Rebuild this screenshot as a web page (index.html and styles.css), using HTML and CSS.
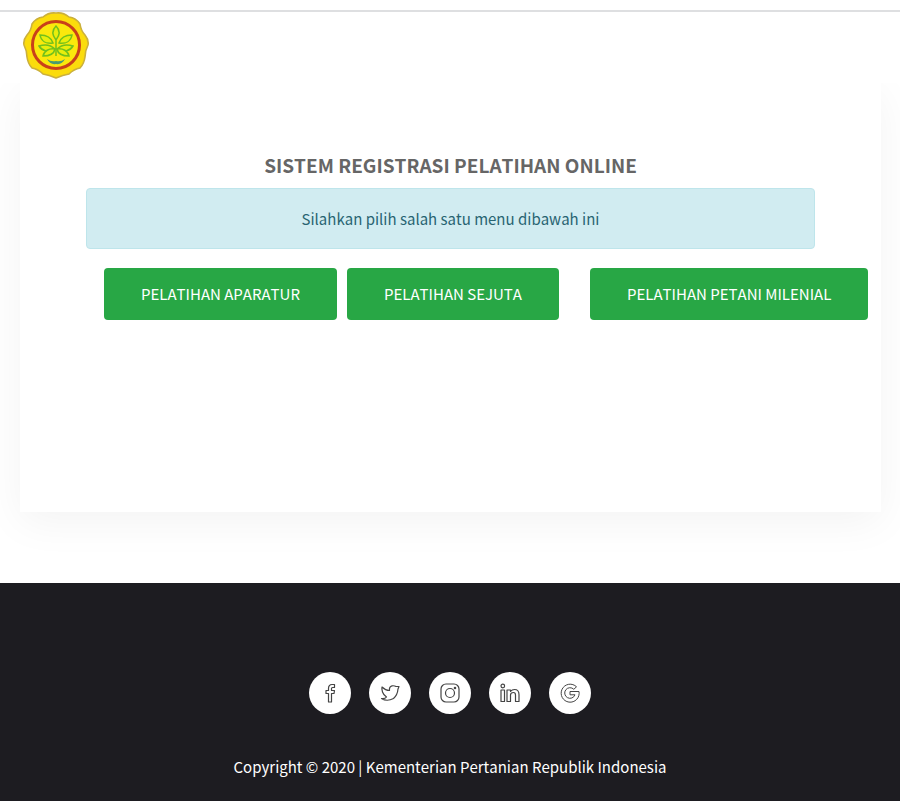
FILE: index.html
```html
<!DOCTYPE html>
<html lang="id">
<head>
<meta charset="utf-8">
<meta name="viewport" content="width=device-width, initial-scale=1">
<title>Sistem Registrasi Pelatihan Online</title>
<link rel="stylesheet" href="styles.css">
</head>
<body>
<header class="header">
  <a class="brand" href="#" aria-label="Kementerian Pertanian">
    <svg class="logo" viewBox="0 0 68 68" aria-hidden="true">
      <path d="M34 1Q41 0 47 5Q54 6 58 12Q59 19 63 23Q67 28 66 33Q63 39 63 45Q62 52 58 56Q52 57 47 62Q41 63 34 66Q27 63 21 62Q16 57 10 56Q6 52 5 45Q5 39 2 33Q1 28 5 23Q9 19 10 12Q14 6 21 5Q27 0 34 1Z" fill="#fbdc0c" stroke="#cbb03c" stroke-width="1.6" stroke-linejoin="round"/>
      <circle cx="34" cy="33" r="23.500" fill="#fbe80c" stroke="#c9401a" stroke-width="3"/>
      <g fill="#e8ee0c" stroke="#72c01c" stroke-width="1.500">
        <path d="M34 14c-4 4-4 9 0 14c4-5 4-10 0-14zM34 28v16"/>
        <path d="M31 31c-2-6-6-8-13-8c1 6 6 9 13 8zM37 31c2-6 6-8 13-8c-1 6-6 9-13 8z"/>
        <path d="M33 37c-5-5-10-5-16-3c3 5 10 7 16 3zM35 37c5-5 10-5 16-3c-3 5-10 7-16 3z"/>
        <path d="M33 37c-6-1-11 2-12 7c6 0 11-2 12-7zM35 37c6-1 11 2 12 7c-6 0-11-2-12-7z"/>
      </g>
      <path d="M25 47q4 3 9 2q5 1 9-2q-3 6-9 5q-6 1-9-5z" fill="#4b9a70"/>
    </svg>
  </a>
</header>
<main class="main">
  <section class="card">
    <h1 class="title">SISTEM REGISTRASI PELATIHAN ONLINE</h1>
    <p class="alert">Silahkan pilih salah satu menu dibawah ini</p>
    <nav class="menu" aria-label="Menu pelatihan">
      <a class="btn" href="#">PELATIHAN APARATUR</a>
      <a class="btn" href="#">PELATIHAN SEJUTA</a>
      <a class="btn" href="#">PELATIHAN PETANI MILENIAL</a>
    </nav>
  </section>
</main>
<footer class="footer">
  <nav class="social" aria-label="Media sosial">
    <a href="#" aria-label="Facebook"><svg viewBox="0 0 20 20"><path d="M8.500 19V10.500H6V7.500H8.500V5.500Q8.500 1.500 12 1.500H14.500V4.500H12.500Q11.500 4.500 11.500 5.500V7.500H14.500L14 10.500H11.500V19Z"/></svg></a>
    <a href="#" aria-label="Twitter"><svg viewBox="0 0 20 20"><path d="M2 4Q5.500 7.500 9.500 7.500Q9 3.500 12 2.800Q14.500 2.500 16 3.500L19 3.500L18 6Q17.500 12 13.500 15.500Q7 19 1.500 15.500Q5 16 6.500 14Q3.500 12 2.500 9Q1.500 6 2 4Z"/></svg></a>
    <a href="#" aria-label="Instagram"><svg viewBox="0 0 20 20"><rect x="1" y="1" width="18" height="18" rx="5"/><circle cx="10" cy="10" r="4.500"/><circle cx="15" cy="5" r=".7"/></svg></a>
    <a href="#" aria-label="LinkedIn"><svg viewBox="0 0 20 20"><path d="M1 7H4.500V18.500H1ZM7 7H10.500V8.500Q12 6.500 14.500 6.500Q19 6.500 19 11.500V18.500H15.500V12Q15.500 9.500 13.500 9.500Q10.500 9.500 10.500 12V18.500H7Z"/><circle cx="2.800" cy="3" r="1.800"/></svg></a>
    <a href="#" aria-label="Google"><svg class="thin" viewBox="0 0 20 20"><path d="M16.500 3.800A9 9 0 1 0 19 8.500H10V11.800H15A5.300 5.300 0 1 1 13.800 6.300Z"/></svg></a>
  </nav>
  <p class="copyright">Copyright © 2020 | Kementerian Pertanian Republik Indonesia</p>
</footer>
</body>
</html>
```

FILE: styles.css
```css
* {
  box-sizing: border-box;
}

body {
  margin: 0;
  min-height: 100vh;
  display: flex;
  flex-direction: column;
  background: #fff;
  color: #666;
  font-family: "Noto Sans CJK SC", "Noto Sans", sans-serif;
  font-size: 15px;
  line-height: 24px;
  font-kerning: none;
}

.header {
  position: relative;
  z-index: 1;
  margin-top: 10px;
  padding: 0 22px 3px;
  border-top: 2px solid #dedfe1;
  background: #fff;
}

.brand,
.logo {
  display: block;
  width: 68px;
}

.main {
  padding: 0 19px 71px 20px;
}

.card {
  padding: 66px 66px 192px;
  background: #fff;
  box-shadow: 0 10px 40px rgba(0, 0, 0, 0.05);
}

.title {
  margin: 0 0 7px;
  font-size: 19px;
  line-height: 32px;
  font-weight: 700;
  text-align: center;
}

.alert {
  margin: 0 0 19px;
  padding: 18px 18px 17px;
  border: 1px solid #bee5eb;
  border-radius: 4px;
  background: #d1ecf1;
  color: #286472;
  text-align: center;
}

.menu {
  display: grid;
  grid-template-columns: repeat(3, minmax(0, 1fr));
}

.btn {
  justify-self: start;
  margin-left: 18px;
  padding: 14px 37px;
  border-radius: 4px;
  background: #28a745;
  color: #fff;
  text-decoration: none;
  white-space: nowrap;
}

.footer {
  flex: 1;
  padding: 89px 20px 21px;
  background: #1d1c21;
  color: #fff;
  text-align: center;
}

.social {
  display: flex;
  justify-content: center;
  gap: 18px;
  margin-bottom: 41px;
}

.social a {
  display: grid;
  place-items: center;
  width: 42px;
  height: 42px;
  border-radius: 50%;
  background: #fff;
}

.social svg {
  width: 20px;
  height: 20px;
  fill: none;
  stroke: #444;
  stroke-width: 1.2;
  stroke-linejoin: round;
}

.social .thin {
  stroke-width: 1;
}

.copyright {
  margin: 0;
}
```
